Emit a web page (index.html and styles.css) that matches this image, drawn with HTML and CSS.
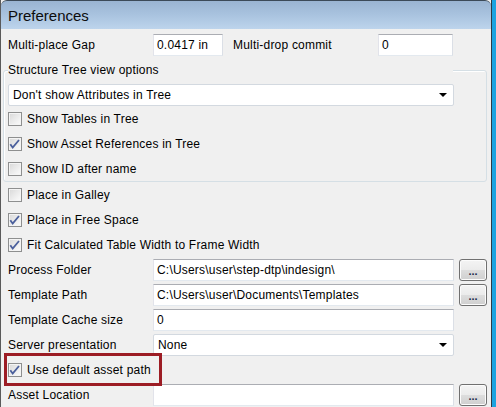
FILE: index.html
```html
<!DOCTYPE html>
<html>
<head>
<meta charset="utf-8">
<link rel="stylesheet" href="styles.css">
</head>
<body>
<div class="window">
  <div class="titlebar">Preferences</div>
  <div class="content">
    <div class="row">
      <span class="lbl">Multi-place Gap</span>
      <div class="input w70">0.0417 in</div>
      <span class="lbl lbl2">Multi-drop commit</span>
      <div class="input w75">0</div>
    </div>
    <fieldset class="group">
      <legend>Structure Tree view options</legend>
      <div class="select full"><span>Don't show Attributes in Tree</span><span class="arrow"></span></div>
      <div class="row"><span class="cb"></span><span>Show Tables in Tree</span></div>
      <div class="row"><span class="cb"><svg viewBox="0 0 12 12" width="12" height="12"><path d="M1.3 6.3 L3.7 9.6 L10 2" /></svg></span><span>Show Asset References in Tree</span></div>
      <div class="row"><span class="cb"></span><span>Show ID after name</span></div>
    </fieldset>
    <div class="row"><span class="cb"></span><span>Place in Galley</span></div>
    <div class="row"><span class="cb"><svg viewBox="0 0 12 12" width="12" height="12"><path d="M1.3 6.3 L3.7 9.6 L10 2" /></svg></span><span>Place in Free Space</span></div>
    <div class="row"><span class="cb"><svg viewBox="0 0 12 12" width="12" height="12"><path d="M1.3 6.3 L3.7 9.6 L10 2" /></svg></span><span>Fit Calculated Table Width to Frame Width</span></div>
    <div class="row">
      <span class="lbl">Process Folder</span>
      <div class="input w301">C:\Users\user\step-dtp\indesign\</div>
      <div class="btn">...</div>
    </div>
    <div class="row">
      <span class="lbl">Template Path</span>
      <div class="input w301">C:\Users\user\Documents\Templates</div>
      <div class="btn">...</div>
    </div>
    <div class="row">
      <span class="lbl">Template Cache size</span>
      <div class="input w301">0</div>
    </div>
    <div class="row">
      <span class="lbl">Server presentation</span>
      <div class="select w301"><span>None</span><span class="arrow"></span></div>
    </div>
    <div class="row hl"><span class="cb"><svg viewBox="0 0 12 12" width="12" height="12"><path d="M1.3 6.3 L3.7 9.6 L10 2" /></svg></span><span>Use default asset path</span></div>
    <div class="row">
      <span class="lbl">Asset Location</span>
      <div class="input w301"></div>
      <div class="btn">...</div>
    </div>
  </div>
</div>
</body>
</html>
```

FILE: styles.css
```css
html, body {
  margin: 0;
  padding: 0;
  background: #1ca3e0;
  height: 100%;
  overflow: hidden;
}
body {
  font-family: "Liberation Sans", Arial, sans-serif;
  font-size: 12px;
  letter-spacing: 0.2px;
  color: #000;
}
.window {
  width: 490px;
  height: 420px;
  background: #f0f0f0;
  border-left: 1px solid #5a5a5a;
  border-right: 1px solid #2e3a46;
}
.titlebar {
  height: 26px;
  line-height: 26px;
  padding: 2px 0 0 7px;
  border-top: 1px solid #3c4a58;
  border-radius: 6px 6px 0 0;
  background: linear-gradient(#9ab4d2, #a9c3df 50%, #bdd4ec);
  font-size: 15px;
  letter-spacing: 0;
  color: #0c0c0c;
}
.content {
  padding: 3px 0 0 7px;
}
.row {
  display: flex;
  align-items: center;
  height: 25px;
}
.lbl {
  flex: 0 0 145px;
  white-space: nowrap;
}
.lbl2 {
  margin-left: 10px;
}
.input {
  box-sizing: border-box;
  height: 22px;
  line-height: 20px;
  padding: 0 3px;
  background: #fff;
  border: 1px solid;
  border-color: #abadb3 #dbdfe6 #e3e9ef #e2e3ea;
  white-space: nowrap;
  overflow: hidden;
}
.w70 { flex: 0 0 70px; }
.w75 { flex: 0 0 75px; }
.w301 { flex: 0 0 301px; width: 301px; }
.select {
  box-sizing: border-box;
  height: 22px;
  display: flex;
  align-items: center;
  justify-content: space-between;
  padding: 0 6px 0 4px;
  background: #fff;
  border: 1px solid #d3d9e0;
  border-radius: 2px;
}
.select.full {
  width: 446px;
  margin-top: 1px;
}
.arrow {
  width: 0;
  height: 0;
  border-top: 4px solid #000;
  border-left: 4px solid transparent;
  border-right: 4px solid transparent;
}
.group {
  margin: 0 4px 0 -5px;
  padding: 0 0 0 4px;
  border: 1px solid #d5dfe5;
  border-radius: 3px;
  box-shadow: inset 1px 1px 0 #fff;
}
.group legend {
  width: 445px;
  padding: 0;
  margin: 0;
  height: 26px;
  line-height: 26px;
  background: #f0f0f0;
}
.cb {
  box-sizing: border-box;
  width: 14px;
  height: 14px;
  margin-right: 5px;
  border: 1px solid #8e8f8f;
  background: linear-gradient(135deg, #d8d8d8, #f2f2f2 70%, #fbfbfb);
  box-shadow: inset 0 0 0 1px #f4f4f4;
  display: flex;
}
.cb svg path {
  fill: none;
  stroke: #4a5f9c;
  stroke-width: 1.8;
}
.btn {
  box-sizing: border-box;
  flex: 0 0 28px;
  height: 22px;
  margin-left: 5px;
  border: 1px solid #707070;
  border-radius: 3px;
  background: linear-gradient(#f4f4f4, #ebebeb 50%, #dddddd 51%, #cfcfcf);
  box-shadow: inset 0 0 0 1px #fcfcfc;
  text-align: center;
  line-height: 22px;
  font-size: 11px;
  font-weight: bold;
  letter-spacing: 0;
  color: #1c2a4a;
}
.hl {
  width: fit-content;
  padding-right: 7px;
  outline: 3px solid #9c1c24;
  outline-offset: 1px;
}
```
